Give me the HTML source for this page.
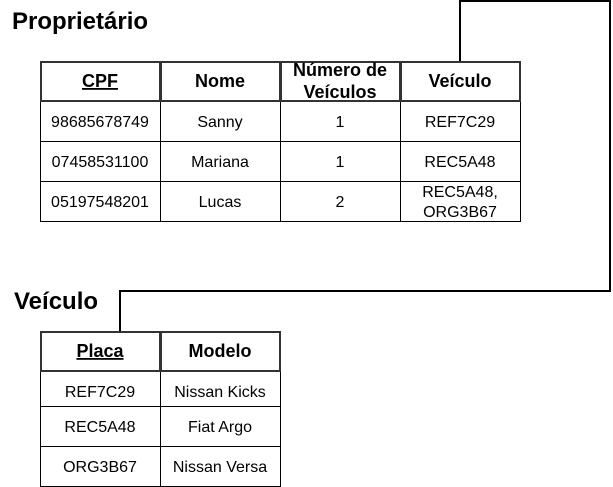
<!DOCTYPE html><html><head><style>html,body{margin:0;padding:0;background:#fff;width:613px;height:487px;overflow:hidden}svg{display:block}text{font-family:"Liberation Sans",sans-serif;fill:#000}</style></head><body>
<svg width="613" height="487" xmlns="http://www.w3.org/2000/svg">
<path d="M460 61 V1 H610 V291 H120 V331" fill="none" stroke="#000" stroke-width="2"/>
<text x="12" y="29" font-size="24" font-weight="bold">Proprietário</text>
<text x="14" y="309" font-size="24" font-weight="bold">Veículo</text>
<g stroke="#000" stroke-width="1" fill="none">
<rect x="40.5" y="101.5" width="480" height="120"/>
<line x1="40" y1="141.5" x2="520" y2="141.5"/><line x1="40" y1="181.5" x2="520" y2="181.5"/>
<line x1="160.5" y1="101" x2="160.5" y2="221"/><line x1="280.5" y1="101" x2="280.5" y2="221"/><line x1="400.5" y1="101" x2="400.5" y2="221"/>
<rect x="40.5" y="371.5" width="240" height="115"/>
<line x1="40" y1="406.5" x2="280" y2="406.5"/><line x1="40" y1="446.5" x2="280" y2="446.5"/>
<line x1="160.5" y1="371" x2="160.5" y2="486"/>
</g>
<g stroke="#333" stroke-width="2" fill="none">
<rect x="41" y="62" width="119" height="39"/><rect x="161" y="62" width="119" height="39"/><rect x="281" y="62" width="119" height="39"/><rect x="401" y="62" width="119" height="39"/>
<rect x="41" y="332" width="119" height="39"/><rect x="161" y="332" width="119" height="39"/>
</g>
<g font-size="18" font-weight="bold" text-anchor="middle">
<text x="100" y="87" text-decoration="underline">CPF</text><text x="220" y="87">Nome</text>
<text x="340" y="76">Número de</text><text x="340" y="98">Veículos</text><text x="460" y="87">Veículo</text>
<text x="100" y="357" text-decoration="underline">Placa</text><text x="220" y="357">Modelo</text>
</g>
<g font-size="16" text-anchor="middle">
<text x="100" y="127">98685678749</text><text x="220" y="127">Sanny</text><text x="340" y="127">1</text><text x="460" y="127">REF7C29</text>
<text x="100" y="167">07458531100</text><text x="220" y="167">Mariana</text><text x="340" y="167">1</text><text x="460" y="167">REC5A48</text>
<text x="100" y="207">05197548201</text><text x="220" y="207">Lucas</text><text x="340" y="207">2</text><text x="460" y="197">REC5A48,</text><text x="460" y="217">ORG3B67</text>
<text x="100" y="397">REF7C29</text><text x="220" y="397">Nissan Kicks</text>
<text x="100" y="432">REC5A48</text><text x="220" y="432">Fiat Argo</text>
<text x="100" y="472">ORG3B67</text><text x="220" y="472">Nissan Versa</text>
</g>
</svg></body></html>
